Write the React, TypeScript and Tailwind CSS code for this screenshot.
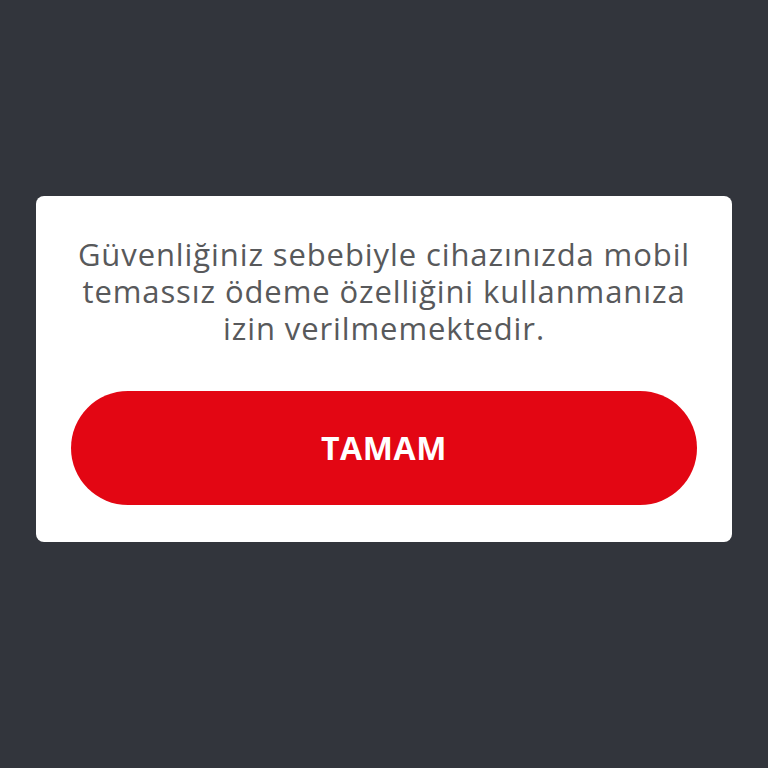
export default function App() {
  return (
    <main className="flex h-[768px] w-full flex-col items-center bg-[#32353c] pt-[196px] font-['Open_Sans',sans-serif]">
      <div className="flex w-[696px] flex-col items-center rounded-[8px] bg-white px-[35px] pt-[40px] pb-[37px]">
        <p className="text-center text-[31px] leading-[37px] tracking-[0.9px] text-[#58595b]">
          Güvenliğiniz sebebiyle cihazınızda mobil
          <br />
          temassız ödeme özelliğini kullanmanıza
          <br />
          izin verilmemektedir.
        </p>
        <button className="mt-[44px] flex h-[114px] w-full items-center justify-center rounded-full bg-[#e30613] text-[32px] font-bold tracking-[0.6px] text-white">
          TAMAM
        </button>
      </div>
    </main>
  );
}
